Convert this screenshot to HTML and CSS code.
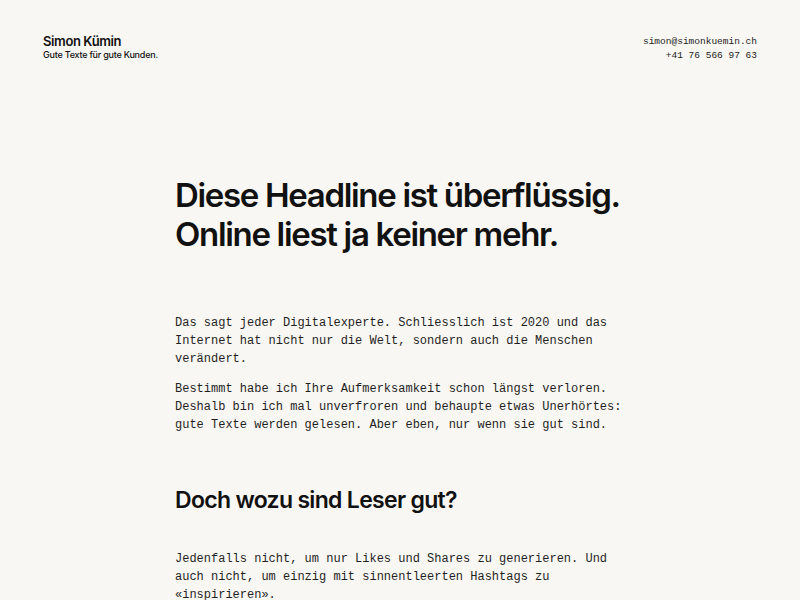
FILE: index.html
```html
<!DOCTYPE html>
<html lang="de">
<head>
<meta charset="utf-8">
<title>Simon Kümin</title>
<link rel="stylesheet" href="styles.css">
</head>
<body>
<header class="site-header">
  <div class="brand">
    <div class="brand-name">Simon Kümin</div>
    <div class="brand-tagline">Gute Texte für gute Kunden.</div>
  </div>
  <div class="contact">
    <div>simon@simonkuemin.ch</div>
    <div>+41 76 566 97 63</div>
  </div>
</header>
<main class="content">
  <h1 class="headline">Diese Headline ist überflüssig. Online liest ja keiner mehr.</h1>
  <section class="text">
    <p>Das sagt jeder Digitalexperte. Schliesslich ist 2020 und das Internet hat nicht nur die Welt, sondern auch die Menschen verändert.</p>
    <p>Bestimmt habe ich Ihre Aufmerksamkeit schon längst verloren. Deshalb bin ich mal unverfroren und behaupte etwas Unerhörtes: gute Texte werden gelesen. Aber eben, nur wenn sie gut sind.</p>
  </section>
  <h2 class="subhead">Doch wozu sind Leser gut?</h2>
  <section class="text">
    <p>Jedenfalls nicht, um nur Likes und Shares zu generieren. Und auch nicht, um einzig mit sinnentleerten Hashtags zu «inspirieren».</p>
  </section>
</main>
</body>
</html>
```
FILE: styles.css
```css
html, body {
  margin: 0;
  padding: 0;
  background: #f9f7f3;
  color: #111;
}
body {
  font-family: Inter, "Noto Sans", sans-serif;
}
.site-header {
  display: flex;
  justify-content: space-between;
  align-items: flex-start;
  padding: 33px 43px 0;
}
.brand-name {
  font-size: 13px;
  font-weight: 600;
  line-height: 16px;
  letter-spacing: -0.03em;
}
.brand-tagline {
  font-size: 9px;
  line-height: 12px;
  font-weight: 500;
  letter-spacing: -0.025em;
}
.contact {
  font-family: "Liberation Mono", monospace;
  font-size: 9.5px;
  line-height: 14px;
  text-align: right;
  color: #222;
  padding-top: 2px;
}
.content {
  width: 450px;
  margin: 0 auto;
  padding-top: 113px;
}
.headline {
  margin: 0;
  font-size: 33px;
  line-height: 39px;
  font-weight: 600;
  letter-spacing: -0.04em;
}
.text {
  margin-top: 60px;
  font-family: "Liberation Mono", monospace;
  font-size: 12px;
  line-height: 18px;
  color: #1f1f1f;
}
.text p {
  margin: 0 0 12px;
}
.subhead {
  margin: 52px 0 0;
  font-size: 23px;
  line-height: 28px;
  font-weight: 600;
  letter-spacing: -0.03em;
}
.subhead + .text {
  margin-top: 36px;
}
```
